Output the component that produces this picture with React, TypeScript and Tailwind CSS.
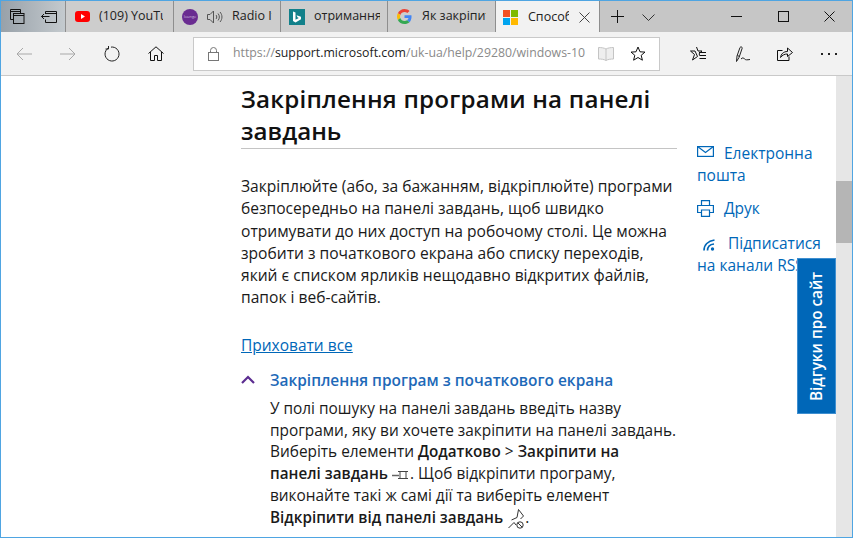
import { ReactNode } from "react";

const font = "font-['Open_Sans','Noto_Sans',sans-serif]";

const Tab = ({
  icon,
  label,
  width,
  labelWidth,
}: {
  icon: ReactNode;
  label: string;
  width: string;
  labelWidth: string;
}) => (
  <div className={`flex h-[31px] items-center border-r border-[#8e8e8e] bg-[#cdcdcd] ${width}`}>
    {icon}
    <span className={`overflow-hidden whitespace-nowrap text-[12.500px] text-[#222] ${labelWidth}`}>
      {label}
    </span>
  </div>
);

const Line = ({ children }: { children: ReactNode }) => <div className="whitespace-nowrap">{children}</div>;

const App = () => {
  return (
    <div className={`flex h-[538px] w-[853px] flex-col overflow-hidden border-x border-b border-[#4fa5e2] bg-white ${font}`}>
      {/* tab strip */}
      <div className="flex h-[32px] shrink-0 border-t border-[#4fa5e2] bg-[#c6c6c6]">
        <div className="flex w-[65px] items-center gap-[16px] border-r border-[#8e8e8e] bg-gradient-to-r from-[#98a1a9] to-[#c4cace] pl-[9px]">
          <svg width="15" height="15" viewBox="0 0 15 15" fill="none" stroke="#111" strokeWidth="1">
            <path d="M3.500 10.500H0.500V0.500H10.500V4M0.500 2.500H10.500" />
            <rect x="3.500" y="4.500" width="10.500" height="10" />
            <path d="M3.500 6.500H14" />
          </svg>
          <svg width="16" height="12" viewBox="0 0 16 12" fill="none" stroke="#111" strokeWidth="1">
            <path d="M4.500 3V0.500H15.500V11.500H4.500V8.500M4.500 2.500H15.500M0.500 5.500H8.500M3 3L0.500 5.500L3 8" />
          </svg>
        </div>
        <Tab
          width="w-[108px]"
          labelWidth="w-[64px]"
          label="(109) YouTube"
          icon={
            <svg className="ml-[9px] mr-[9px] shrink-0" width="15" height="11" viewBox="0 0 15 11">
              <rect width="15" height="11" rx="3" fill="#f00" />
              <path d="M6 3L10 5.500L6 8Z" fill="#fff" />
            </svg>
          }
        />
        <Tab
          width="w-[107px]"
          labelWidth="w-[40px]"
          label="Radio Italia"
          icon={
            <>
              <div className="ml-[8px] mr-[9px] flex h-[16px] w-[16px] shrink-0 items-center justify-center rounded-full bg-[#6a2c91] text-[4px] leading-none text-[#cdb8dd]">
                lounge
              </div>
              <svg className="mr-[9px] shrink-0" width="16" height="14" viewBox="0 0 16 14" fill="none" stroke="#555" strokeWidth="1">
                <path d="M0.500 4.500H3L6.500 1V13L3 9.500H0.500Z" />
                <path d="M9 5C10 6 10 8 9 9M11 3.500C12.800 5.500 12.800 8.500 11 10.500M13 2C15.600 5 15.600 9 13 12" />
              </svg>
            </>
          }
        />
        <Tab
          width="w-[107px]"
          labelWidth="w-[66px]"
          label="отримання"
          icon={
            <svg className="ml-[8px] mr-[9px] shrink-0" width="16" height="16" viewBox="0 0 16 16">
              <rect width="16" height="16" fill="#12808a" />
              <path d="M4 2.500L6.500 3.400V10.800L9.800 9L8.400 8.300L7.600 6.300L12 7.800V10.200L6.500 13.500L4 12Z" fill="#fff" />
            </svg>
          }
        />
        <Tab
          width="w-[108px]"
          labelWidth="w-[64px]"
          label="Як закріпити"
          icon={
            <svg className="ml-[9px] mr-[10px] shrink-0" width="15" height="15" viewBox="0 0 48 48">
              <path fill="#EA4335" d="M24 9.500c3.500 0 6.700 1.300 9.200 3.400l6.900-6.900C35.900 2.400 30.300 0 24 0 14.600 0 6.600 5.400 2.700 13.200l8 6.200C12.600 13.600 17.800 9.500 24 9.500z" />
              <path fill="#4285F4" d="M46.500 24.500c0-1.600-.1-3.100-.4-4.500H24v9h12.700c-.5 2.900-2.200 5.400-4.700 7l7.700 6c4.500-4.200 6.800-10.300 6.800-17.500z" />
              <path fill="#FBBC05" d="M10.700 28.600c-.5-1.400-.8-3-.8-4.600s.3-3.200.8-4.600l-8-6.200C1 16.500 0 20.100 0 24s1 7.500 2.700 10.800l8-6.200z" />
              <path fill="#34A853" d="M24 48c6.500 0 11.900-2.100 15.900-5.800l-7.700-6c-2.200 1.400-4.900 2.300-8.200 2.300-6.200 0-11.400-4.200-13.300-9.800l-8 6.200C6.600 42.600 14.600 48 24 48z" />
            </svg>
          }
        />
        <div className="flex h-[32px] w-[104px] items-center border-r border-[#8e8e8e] bg-[#f2f2f2]">
          <div className="ml-[7px] mr-[10px] grid h-[15px] w-[15px] shrink-0 grid-cols-2 gap-px">
            <div className="bg-[#f25022]" />
            <div className="bg-[#7fba00]" />
            <div className="bg-[#00a4ef]" />
            <div className="bg-[#ffb900]" />
          </div>
          <span className="w-[41px] overflow-hidden whitespace-nowrap text-[12.500px] text-[#222]">Способи</span>
          <svg className="ml-[10px] shrink-0" width="11" height="11" viewBox="0 0 11 11" stroke="#444" strokeWidth="1">
            <path d="M0.500 0.500L10.500 10.500M10.500 0.500L0.500 10.500" />
          </svg>
        </div>
        <svg className="ml-[11px] mt-[9px] shrink-0" width="13" height="13" viewBox="0 0 13 13" stroke="#111" strokeWidth="1">
          <path d="M6.500 0V13M0 6.500H13" />
        </svg>
        <svg className="ml-[18px] mt-[13px] shrink-0" width="13" height="7" viewBox="0 0 13 7" fill="none" stroke="#333" strokeWidth="1">
          <path d="M0.500 0.500L6.500 6.500L12.500 0.500" />
        </svg>
        <svg className="ml-[76px] mt-[15px] shrink-0" width="11" height="1" viewBox="0 0 11 1" stroke="#111">
          <path d="M0 0.500H11" />
        </svg>
        <svg className="ml-[36px] mt-[10px] shrink-0" width="11" height="11" viewBox="0 0 11 11" fill="none" stroke="#111">
          <rect x="0.500" y="0.500" width="10" height="10" />
        </svg>
        <svg className="ml-[35px] mt-[10px] shrink-0" width="11" height="11" viewBox="0 0 11 11" stroke="#111">
          <path d="M0.500 0.500L10.500 10.500M10.500 0.500L0.500 10.500" />
        </svg>
      </div>

      {/* toolbar */}
      <div className="flex h-[44px] shrink-0 items-center border-b border-[#c9c9c9] bg-[#f2f2f2]">
        <svg className="ml-[15px] shrink-0" width="16" height="14" viewBox="0 0 16 14" fill="none" stroke="#a8a8a8">
          <path d="M16 7H1M7 1L1 7L7 13" />
        </svg>
        <svg className="ml-[28px] shrink-0" width="16" height="14" viewBox="0 0 16 14" fill="none" stroke="#a8a8a8">
          <path d="M0 7H15M9 1L15 7L9 13" />
        </svg>
        <svg className="ml-[28px] shrink-0" width="16" height="16" viewBox="0 0 16 16" fill="none" stroke="#222">
          <path d="M4 2.300A7 7 0 1 0 7 1.100M4.500 0V3H1.500" />
        </svg>
        <svg className="ml-[28px] shrink-0" width="16" height="15" viewBox="0 0 16 15" fill="none" stroke="#111">
          <path d="M0.500 7.500L8 0.800L15.500 7.500M2.500 6V14.500H6.500V9.500H9.500V14.500H13.500V6" />
        </svg>
        <div className="ml-[29px] flex h-[34px] w-[467px] items-center border border-[#c9c9c9] bg-white">
          <svg className="ml-[14px] shrink-0" width="11" height="14" viewBox="0 0 11 14" fill="none" stroke="#777">
            <rect x="0.500" y="5.500" width="10" height="8" />
            <path d="M2.500 5.500V3.500A3 3 0 0 1 8.500 3.500V5.500" />
          </svg>
          <span className="ml-[14px] w-[355px] overflow-hidden whitespace-nowrap text-[12.300px] text-[#8a8a8a]">
            https://<span className="text-[#222]">support.microsoft.com</span>/uk-ua/help/29280/windows-10
          </span>
          <svg className="ml-[10px] shrink-0" width="16" height="14" viewBox="0 0 16 14" fill="#eee" stroke="#c4c4c4">
            <path d="M8 2C6 .800 3 .500.500.500V12C3 12 6 12.300 8 13.500C10 12.300 13 12 15.500 12V.500C13 .500 10 .800 8 2ZM8 2V13.500" />
          </svg>
          <svg className="ml-[16px] shrink-0" width="16" height="15" viewBox="0 0 16 15" fill="none" stroke="#111">
            <path d="M8 1L10 5.800L15 6.100L11.200 9.300L12.400 14.200L8 11.500L3.600 14.200L4.800 9.300L1 6.100L6 5.800Z" />
          </svg>
        </div>
        <svg className="ml-[30px] shrink-0" width="16" height="15" viewBox="0 0 16 15" fill="none" stroke="#111">
          <path d="M6.500 1L8 5H12L9 7.800L9.800 9.500M7.500 10.500L2.500 14L4.500 8.500L0.500 5H5Z" />
          <path d="M9 6.500H16M9.500 9.500H16M9.500 12.500H16" />
        </svg>
        <svg className="ml-[29px] shrink-0" width="16" height="16" viewBox="0 0 16 16" fill="none" stroke="#222">
          <path d="M1.500 15.500L2 10L5 1.500C5.500 .500 7.500 .800 7.200 2.200L4 11.500L1.500 15.500ZM2.500 9.500L4.500 10.500" />
          <path d="M6 13C7.500 11.500 8.500 11.500 9.500 13C10.500 14 12 14 15 13.500" />
        </svg>
        <svg className="ml-[26px] shrink-0" width="16" height="15" viewBox="0 0 16 15" fill="none" stroke="#111">
          <path d="M5.500 4.500H.500V14.500H12V10.500" />
          <path d="M3.500 11.500C4 8 6.500 5.500 10.500 5.500V2L15.500 6.500L10.500 10.500V8C7.500 8 5.500 9 3.500 11.500Z" />
        </svg>
        <div className="ml-[28px] flex gap-[5px]">
          <div className="h-[2px] w-[2px] bg-[#222]" />
          <div className="h-[2px] w-[2px] bg-[#222]" />
          <div className="h-[2px] w-[2px] bg-[#222]" />
        </div>
      </div>

      {/* page */}
      <div className="relative flex min-h-0 flex-1 overflow-hidden">
        <div className="flex min-w-0 flex-1 pl-[240px]">
          <main className="w-[436px] shrink-0 text-[#1a1a1a]">
            <h1 className="mt-[7px] border-b border-[#c4c4c4] pb-[1px] text-[24.200px] font-semibold leading-[32px] text-[#111]">
              <div className="whitespace-nowrap tracking-[0.2px]">Закріплення програми на панелі</div>
              <Line>завдань</Line>
            </h1>
            <div className="mt-[26px] text-[15.600px] leading-[22.300px]">
              <Line>Закріплюйте (або, за бажанням, відкріплюйте) програми</Line>
              <Line>безпосередньо на панелі завдань, щоб швидко</Line>
              <Line>отримувати до них доступ на робочому столі. Це можна</Line>
              <Line>зробити з початкового екрана або списку переходів,</Line>
              <Line>який є списком ярликів нещодавно відкритих файлів,</Line>
              <Line>папок і веб-сайтів.</Line>
            </div>
            <a className="mt-[25px] block text-[15.500px] leading-[22px] text-[#0067b8] underline">Приховати все</a>
            <div className="mt-[13px] flex items-center text-[15.450px] font-semibold leading-[22px] text-[#1e69b8]">
              <svg className="shrink-0" width="14" height="9" viewBox="0 0 14 9" fill="none" stroke="#5c2d91" strokeWidth="2.200">
                <path d="M1 8L7 2L13 8" />
              </svg>
              <span className="ml-[15px]">Закріплення програм з початкового екрана</span>
            </div>
            <div className="ml-[29px] mt-[7px] text-[15.400px] leading-[21.800px]">
              <Line>У полі пошуку на панелі завдань введіть назву</Line>
              <Line>програми, яку ви хочете закріпити на панелі завдань.</Line>
              <Line>
                Виберіть елементи <b className="text-[15.250px] font-semibold">Додатково</b> &gt; <b className="text-[15.250px] font-semibold">Закріпити на</b>
              </Line>
              <Line>
                <b className="text-[15.250px] font-semibold">панелі завдань</b>
                <svg className="ml-[4px] inline-block" width="18" height="11" viewBox="0 0 18 11" fill="none">
                  <path d="M0 5.500H7" stroke="#666" strokeWidth="1.500" />
                  <path d="M6 1.500H16M8 1.500V8.500H14V1.500M6 8.500H16" stroke="#444" />
                </svg>
                . Щоб відкріпити програму,
              </Line>
              <Line>виконайте такі ж самі дії та виберіть елемент</Line>
              <Line>
                <b className="text-[15.250px] font-semibold">Відкріпити від панелі завдань</b>
                <svg className="ml-[5px] inline-block" width="17" height="20" viewBox="0 0 17 20" fill="none" stroke="#333">
                  <path d="M0.500 19L6 13.500M3.500 11L9 8.500L10.500 0.500L15.500 7L12.500 10M6 13.500L8 16" />
                  <circle cx="12" cy="16" r="3.200" />
                  <path d="M9.800 13.800L14.200 18.200" />
                </svg>
                .
              </Line>
            </div>
          </main>

          <aside className="ml-[20px] min-w-0 flex-1 text-[15.500px] leading-[22px] text-[#0067b8]">
            <div className="mt-[66px]">
              <div className="flex items-center whitespace-nowrap">
                <svg className="mb-[3px] shrink-0" width="17" height="11" viewBox="0 0 17 11" fill="none" stroke="#0067b8" strokeWidth="1.200">
                  <rect x="0.600" y="0.600" width="15.800" height="9.800" />
                  <path d="M0.600 0.600L8.500 6.500L16.400 0.600" />
                </svg>
                <span className="ml-[10px]">Електронна</span>
              </div>
              <div>пошта</div>
            </div>
            <div className="mt-[11px] flex items-center">
              <svg className="shrink-0" width="17" height="17" viewBox="0 0 17 17" fill="none" stroke="#0067b8" strokeWidth="1.200">
                <path d="M4.500 5.500V.600H12.500V5.500M4.500 12.500H.600V5.500H16.400V12.500H12.500M4.500 10H12.500V16.400H4.500Z" />
              </svg>
              <span className="ml-[10px]">Друк</span>
            </div>
            <div className="mt-[13px] whitespace-nowrap">
              <svg className="ml-[6px] inline-block" width="13" height="12" viewBox="0 0 13 12" fill="none" stroke="#0067b8" strokeWidth="1.700">
                <path d="M1 11.500C1 6 5 2 11.500 1M4.500 11.500C4.500 8 7 5.500 11 5" />
                <circle cx="9.500" cy="10" r="1.700" fill="#0067b8" stroke="none" />
              </svg>
              <span className="ml-[12px]">Підписатися</span>
              <div>на канали RSS</div>
            </div>
          </aside>
        </div>

        {/* scrollbar */}
        <div className="relative w-[16px] shrink-0 bg-[#e6e6e6]">
          <div className="mt-[105px] h-[62px] w-full bg-[#b5b5b5]" />
        </div>

        {/* feedback tab */}
        <div className="absolute left-[796px] top-[182px] flex h-[156px] w-[39px] items-center justify-center border border-[#3f8fd0] bg-[#0067b8]">
          <span className="-rotate-90 whitespace-nowrap text-[15.300px] font-semibold text-white">Відгуки про сайт</span>
        </div>
      </div>
    </div>
  );
};

export default App;
